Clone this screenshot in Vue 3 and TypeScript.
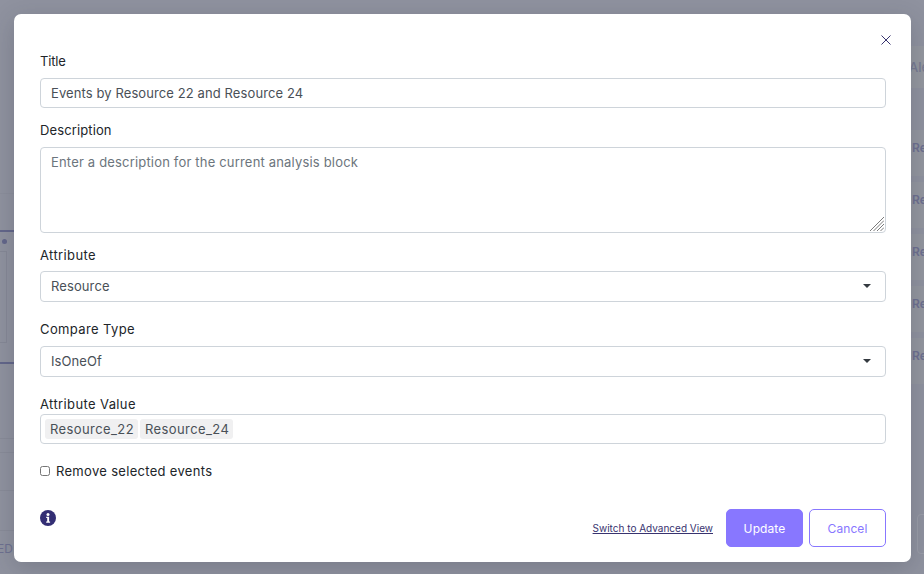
<script setup lang="ts">
const rightRows: string[] = ['Re', 'Re', 'Re', 'Re', 'Re']
const tags: string[] = ['Resource_22', 'Resource_24']
// faint table lines of the page behind the dialog, as gaps from one to the next
const leftLines: number[] = [74, 13, 37, 39]
</script>

<template>
  <div class="page">
    <div class="bg-left">
      <div class="bl-faint"></div>
      <div class="bl-rule"></div>
      <div class="bl-dot"></div>
      <div class="bl-box"></div>
      <div class="bl-rule bl-rule2"></div>
      <div v-for="(g, i) in leftLines" :key="i" class="bl-faint2" :style="{ marginTop: g + 'px' }"></div>
      <div class="bl-ed">ED</div>
    </div>
    <div class="bg-right">
      <div class="br-head"><span>Ale</span></div>
      <div v-for="(row, i) in rightRows" :key="i" class="br-row">{{ row }}</div>
      <div class="br-box"></div>
    </div>

    <div class="modal">
      <button class="close" type="button" aria-label="Close">
        <svg width="10" height="10" viewBox="0 0 10 10">
          <path d="M0.5 0.5l9 9M9.5 0.5l-9 9" stroke="#38336f" stroke-width="1" fill="none" />
        </svg>
      </button>

      <label class="lbl first">Title</label>
      <input class="ctl title-input" type="text" value="Events by Resource 22 and Resource 24" />

      <label class="lbl desc">Description</label>
      <div class="area-wrap">
        <textarea class="ctl area" placeholder="Enter a description for the current analysis block"></textarea>
        <svg class="grip" width="14" height="14" viewBox="0 0 14 14">
          <path d="M0 14L14 0M3.5 14L14 3.5M7 14l7-7M10.5 14l3.5-3.5" stroke="#7b7b7b" stroke-width="1" fill="none" />
        </svg>
      </div>

      <label class="lbl tight">Attribute</label>
      <div class="select-wrap">
        <div class="ctl sel">Resource</div>
        <svg class="caret" width="8" height="4" viewBox="0 0 8 4"><path d="M0 0h8L4 4z" fill="#343a40" /></svg>
      </div>

      <label class="lbl wide">Compare Type</label>
      <div class="select-wrap">
        <div class="ctl sel">IsOneOf</div>
        <svg class="caret" width="8" height="4" viewBox="0 0 8 4"><path d="M0 0h8L4 4z" fill="#343a40" /></svg>
      </div>

      <label class="lbl wide value">Attribute Value</label>
      <div class="ctl tags">
        <span v-for="t in tags" :key="t" class="tag">{{ t }}</span>
      </div>

      <label class="check">
        <input type="checkbox" />
        <span>Remove selected events</span>
      </label>

      <div class="foot">
        <svg class="info" width="16" height="16" viewBox="0 0 16 16">
          <circle cx="8" cy="8" r="8" fill="#332e74" />
          <circle cx="8" cy="4.4" r="1.5" fill="#fff" />
          <path d="M6.2 6.8h2.9v4.7h1v1.3H6.2v-1.3h1v-3.4h-1z" fill="#fff" />
        </svg>
        <div class="actions">
          <a class="adv" href="#">Switch to Advanced View</a>
          <button class="btn primary" type="button">Update</button>
          <button class="btn outline" type="button">Cancel</button>
        </div>
      </div>
    </div>
  </div>
</template>

<style>
html, body {
  margin: 0;
  height: 100%;
  overflow: hidden;
}
</style>

<style scoped>
.page {
  position: relative;
  display: flex;
  justify-content: space-between;
  width: 924px;
  height: 574px;
  overflow: hidden;
  background: #8f929f;
  font-family: Inter, "Open Sans", sans-serif;
  font-size: 13px;
  color: #212529;
}

/* dimmed page behind the dialog */
.bg-left {
  width: 14px;
  padding-top: 193px;
  box-sizing: border-box;
  color: #6d7090;
  font-size: 12px;
}

.bl-faint {
  height: 1px;
  margin-bottom: 36px;
  background: #8b8e9b;
}

.bl-faint2 {
  height: 1px;
  background: #888b98;
}

.bl-rule {
  height: 2px;
  background: #62668a;
}

.bl-dot {
  width: 5px;
  height: 5px;
  margin: 7px 0 0 2px;
  border-radius: 50%;
  background: #62668a;
}

.bl-box {
  width: 7px;
  height: 92px;
  margin-top: 7px;
  border: solid #858896;
  border-width: 1px 1px 1px 0;
  box-sizing: border-box;
}

.bl-rule2 {
  margin-top: 19px;
}

.bl-ed {
  margin: 11px 0 0 -3px;
  line-height: 14px;
  white-space: nowrap;
  overflow: hidden;
}

.bg-right {
  width: 13px;
  padding-top: 46px;
  box-sizing: border-box;
  color: #6d7090;
  font-size: 12px;
  font-weight: 600;
}

.br-head {
  height: 42px;
  line-height: 42px;
  background: #94979f;
  font-weight: 500;
  font-size: 13px;
  color: #777a92;
  margin-bottom: 42px;
  white-space: nowrap;
}

.br-head span {
  margin-left: -2px;
}

.br-row {
  height: 46px;
  line-height: 36px;
  margin-bottom: 6px;
  padding-left: 1px;
  background: #93969f;
  white-space: nowrap;
  overflow: hidden;
}

.br-box {
  width: 13px;
  height: 40px;
  margin: 130px 0 0 6px;
  border: 1px solid #9a9da8;
  border-radius: 4px;
  box-sizing: border-box;
}

.modal {
  position: absolute;
  left: 14px;
  top: 14px;
  width: 897px;
  height: 548px;
  box-sizing: border-box;
  padding: 38px 25px 0 26px;
  display: flex;
  flex-direction: column;
  background: #fff;
  border-radius: 7px;
  box-shadow: 0 6px 24px rgba(40, 44, 60, 0.22);
}

.close {
  position: absolute;
  top: 21px;
  right: 20px;
  width: 10px;
  height: 10px;
  padding: 0;
  border: 0;
  background: none;
  display: flex;
}

.lbl {
  display: block;
  height: 18px;
  line-height: 18px;
  margin: 13px 0 8px;
  letter-spacing: 0.38px;
  color: #212529;
}

.lbl.first {
  margin-top: 0;
  letter-spacing: -0.2px;
}

.lbl.desc {
  letter-spacing: 0.12px;
}

.lbl.tight {
  margin-bottom: 7px;
}

.lbl.wide {
  margin-top: 18px;
}

.lbl.value {
  margin-bottom: 1px;
}

.ctl {
  display: block;
  width: 100%;
  height: 30px;
  box-sizing: border-box;
  margin: 0;
  padding: 0 10px;
  border: 1px solid #ced4da;
  border-radius: 4px;
  background: #fff;
  color: #495057;
  font: inherit;
  letter-spacing: 0.1px;
  outline: none;
}

.area-wrap {
  position: relative;
}

.area {
  height: 86px;
  padding-top: 5px;
  line-height: 18px;
  letter-spacing: 0.18px;
  resize: none;
}

.area::placeholder {
  color: #6c757d;
  opacity: 1;
}

.grip {
  position: absolute;
  right: 2px;
  bottom: 2px;
}

.select-wrap {
  position: relative;
}

.sel {
  height: 31px;
  line-height: 29px;
}

.caret {
  position: absolute;
  right: 15px;
  top: 13px;
}

.tags {
  display: flex;
  align-items: center;
  gap: 2px;
  padding: 0 4px;
}

.tag {
  height: 20px;
  line-height: 20px;
  padding: 0 4px 0 5px;
  border-radius: 3px;
  background: #f0f0f1;
  letter-spacing: 0.4px;
  white-space: nowrap;
}

.check {
  display: flex;
  align-items: center;
  gap: 6px;
  height: 18px;
  margin-top: 18px;
  letter-spacing: 0.31px;
}

.check input {
  width: 10px;
  height: 10px;
  margin: 0;
}

.foot {
  display: flex;
  justify-content: space-between;
  align-items: flex-start;
  margin-top: 29px;
}

.info {
  margin-top: 1px;
}

.actions {
  display: flex;
  align-items: center;
}

.adv {
  margin: 0 13px 1px 0;
  color: #38336f;
  font-size: 10px;
  text-decoration: underline;
}

.btn {
  width: 77px;
  height: 38px;
  box-sizing: border-box;
  border-radius: 5px;
  font: inherit;
  font-size: 12px;
  padding: 0;
  letter-spacing: 0.1px;
}

.primary {
  border: 1px solid #8877ff;
  background: #8877ff;
  color: #fff;
}

.outline {
  margin-left: 6px;
  border: 1px solid #8877ff;
  background: #fff;
  color: #8877ff;
}
</style>
